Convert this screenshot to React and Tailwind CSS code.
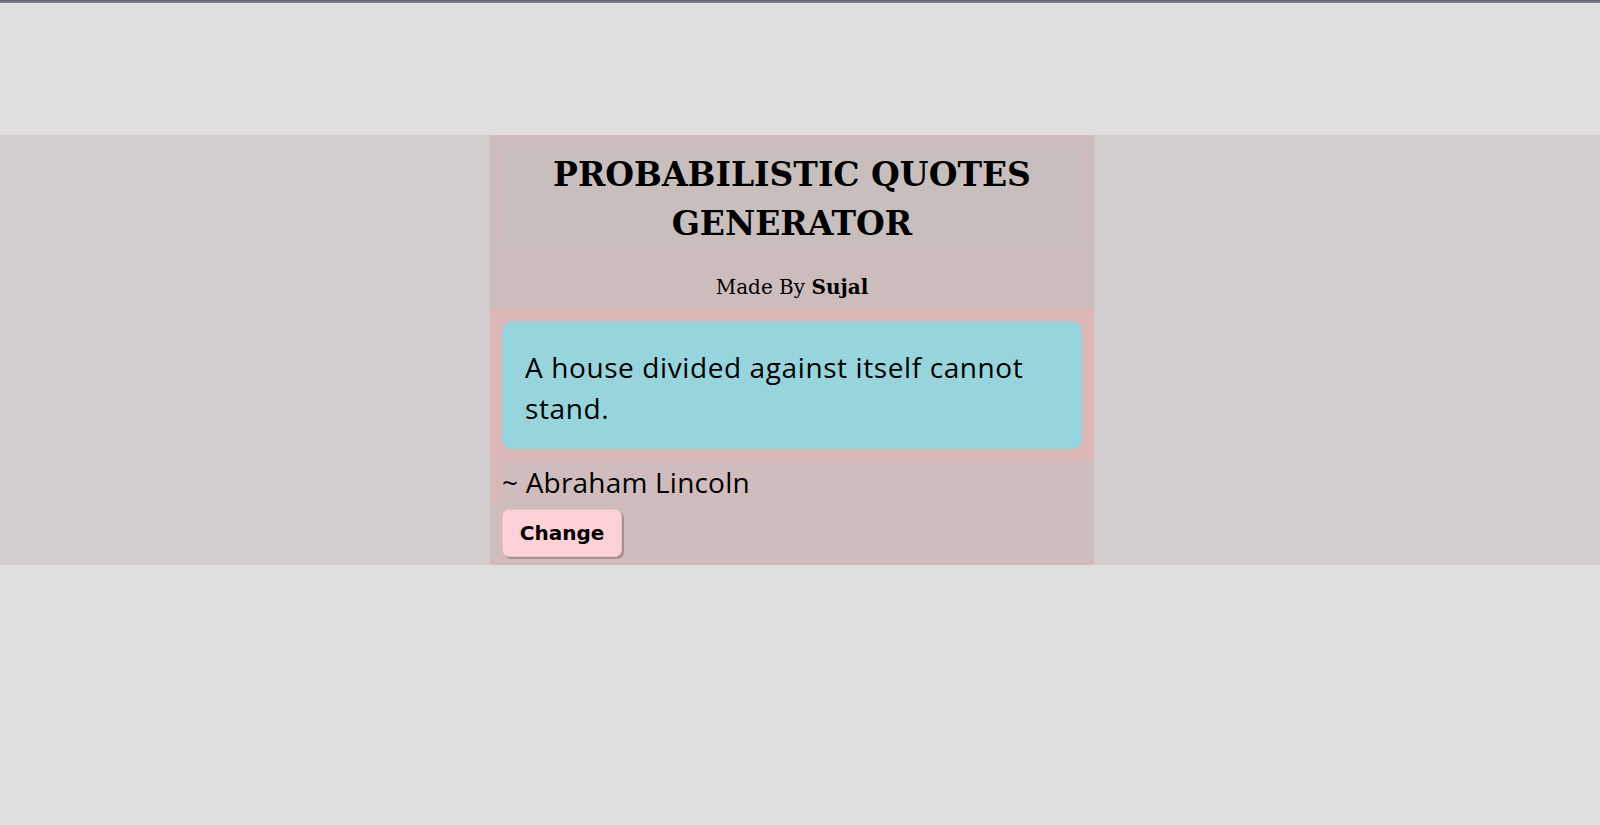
export default function App() {
  return (
    <div className="min-h-screen bg-[#e0dfdd]">
      <div className="h-[3px] bg-gradient-to-b from-[#5c5b6b] to-[#8d8c99]" />
      <div className="h-[132px]" />
      <div className="bg-[#d2cecd]">
        <div className="ml-[490px] w-[604px] bg-[#cdbcbc]">
          <div className="pt-[17px]">
            <div className="mx-4 h-[96px] bg-[#c9bebe]">
              <h1
                className="-mt-[2px] text-center font-bold text-[33px] leading-[49px] text-black"
                style={{ fontFamily: '"DejaVu Serif", "Liberation Serif", serif' }}
              >
                PROBABILISTIC QUOTES
                <br />
                GENERATOR
              </h1>
            </div>
            <div
              className="pt-[29px] pb-[8px] text-center text-[20px] leading-[24px] text-black"
              style={{ fontFamily: '"DejaVu Serif", "Liberation Serif", serif' }}
            >
              Made By <b>Sujal</b>
            </div>
          </div>
          <div className="bg-[#dcb7b7] px-3 pt-[14px] pb-3">
            <div className="bg-[#98d4dc] rounded-[10px] pl-[23px] pr-[20px] pt-[26px] pb-[20px]">
              <p
                className="text-[28px] leading-[41px] tracking-[0.6px] text-black"
                style={{ fontFamily: '"Open Sans", "Noto Sans", sans-serif' }}
              >
                A house divided against itself cannot stand.
              </p>
            </div>
          </div>
          <div className="bg-[#d0bcbc]">
            <div className="bg-[#d7b9b9] pl-3">
              <div
                className="bg-[#d0bcbc] h-[40px] leading-[42px] text-[28px] tracking-[0.2px] text-black"
                style={{ fontFamily: '"Open Sans", "Noto Sans", sans-serif' }}
              >
                ~ Abraham Lincoln
              </div>
            </div>
            <div className="px-3 pt-2 pb-2">
              <button
                className="w-[120px] h-[48px] rounded-[7px] bg-[#ffd1d6] border border-[#e8c4c4] shadow-[2px_2px_0_#a89090] text-[20px] font-bold text-black flex items-center justify-center"
                style={{ fontFamily: '"DejaVu Sans", "Liberation Sans", sans-serif' }}
              >
                Change
              </button>
            </div>
          </div>
        </div>
      </div>
    </div>
  );
}
